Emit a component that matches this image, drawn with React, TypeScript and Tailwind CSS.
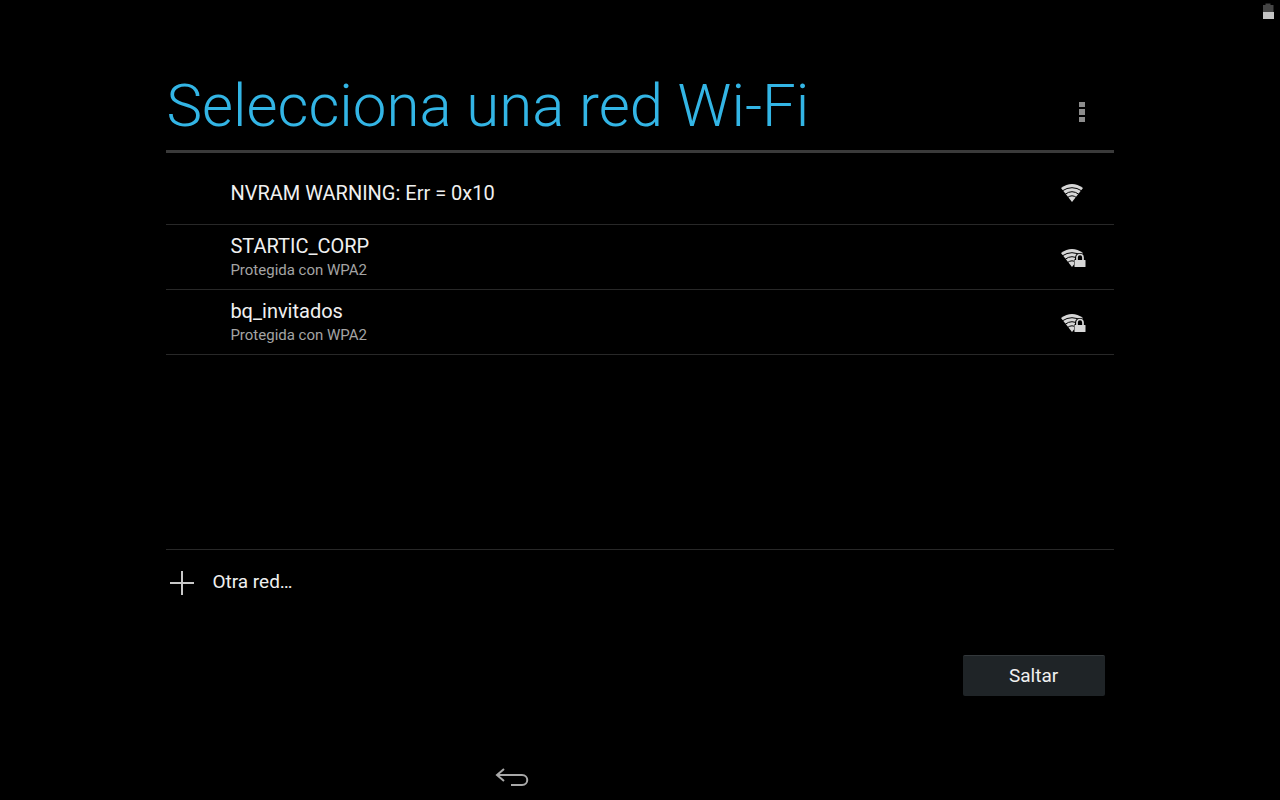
type Network = {
  ssid: string;
  security?: string;
};

const networks: Network[] = [
  { ssid: "NVRAM WARNING: Err = 0x10" },
  { ssid: "STARTIC_CORP", security: "Protegida con WPA2" },
  { ssid: "bq_invitados", security: "Protegida con WPA2" },
];

export default function App() {
  return (
    <div className="flex min-h-screen flex-col bg-black font-['Roboto','Noto_Sans',sans-serif] text-[#f0f0f0]">
      <header className="flex h-6 items-center justify-end pr-1.5">
        <BatteryIcon />
      </header>

      <main className="flex w-full grow flex-col px-[13%] pt-10">
        <div className="flex h-[89px] items-start justify-between border-b-3 border-[#3a3a3a] pt-1">
          <h1 className="text-[60px] leading-[76px] font-light text-[#33b5e5]">
            Selecciona una red Wi-Fi
          </h1>
          <button type="button" aria-label="Más opciones" className="mt-7 mr-6 flex h-8 w-4 items-center justify-center">
            <OverflowIcon />
          </button>
        </div>

        <ul className="grow pt-[7px]">
          {networks.map((network) => (
            <li key={network.ssid} className="border-b border-[#282828]">
              <NetworkRow {...network} />
            </li>
          ))}
        </ul>

        <button type="button" className="flex h-[66px] items-center gap-[18px] border-t border-[#282828] pl-1 text-left text-[19px]">
          <PlusIcon />
          Otra red…
        </button>

        <div className="flex justify-end pt-10 pr-[9px] pb-14">
          <button
            type="button"
            className="h-[41px] w-[142px] rounded-xs border-t border-[#33383b] bg-[#1f2427] text-[19px]"
          >
            Saltar
          </button>
        </div>
      </main>

      <nav className="flex h-12 items-center pt-1 pl-[38.7%]">
        <button type="button" aria-label="Atrás">
          <BackIcon />
        </button>
      </nav>
    </div>
  );
}

function NetworkRow({ ssid, security }: Network) {
  return (
    <button type="button" className="flex h-16 w-full items-center justify-between pt-0.5 pr-7 pl-16 text-left">
      <span>
        <span className="block text-[20px] leading-6">{ssid}</span>
        {security && <span className="block text-[15px] leading-6 text-[#a4a4a4]">{security}</span>}
      </span>
      <WifiIcon locked={Boolean(security)} />
    </button>
  );
}

function WifiIcon({ locked }: { locked: boolean }) {
  return (
    <svg width="26" height="20" viewBox="0 0 26 20" aria-hidden="true">
      <path d="M1 5Q12 -3 23 5L12 19Z" fill="#d6d6d6" />
      <g fill="none" stroke="#000" strokeWidth="1">
        <path d="M2 8Q12 1.400 22 8" />
        <path d="M5 11.400Q12 6 19 11.400" />
        <path d="M7.400 14.600Q12 11 16.600 14.600" />
      </g>
      {locked && (
        <>
          <path d="M14 20V11.500H15V9.500Q15.500 5 20 5T25 9.500V11.500H26V20Z" fill="#000" />
          <rect x="14.500" y="12" width="11" height="7" rx="0.600" fill="#d8d8d8" />
          <path d="M17 12.500V9.500A3 3 0 0 1 23 9.500V12.500" fill="none" stroke="#d8d8d8" strokeWidth="1.700" />
        </>
      )}
    </svg>
  );
}

function BatteryIcon() {
  return (
    <svg width="12" height="18" viewBox="0 0 12 18" aria-hidden="true">
      <path d="M1 2H3.500V0.500H8.500V2H11.500V9H1Z" fill="#454545" />
      <rect x="1" y="9" width="11" height="7" fill="#c4c4c4" />
    </svg>
  );
}

function OverflowIcon() {
  return (
    <svg width="6" height="22" viewBox="0 0 6 22" fill="#8c8c8c" aria-hidden="true">
      <rect x="0" y="1" width="6" height="5" />
      <rect x="0" y="8" width="6" height="6" />
      <rect x="0" y="16" width="6" height="5" />
    </svg>
  );
}

function PlusIcon() {
  return (
    <svg width="24" height="24" viewBox="0 0 24 24" fill="#c8c8c8" aria-hidden="true">
      <rect x="11" y="0" width="2" height="24" />
      <rect x="0" y="11" width="24" height="2" />
    </svg>
  );
}

function BackIcon() {
  return (
    <svg width="34" height="20" viewBox="0 0 34 20" fill="none" stroke="#a8a8a8" strokeWidth="2" aria-hidden="true">
      <path d="M9 1L2 7L9 13" />
      <path d="M2 7H27C34 7 34 17 27 17H16" />
    </svg>
  );
}
